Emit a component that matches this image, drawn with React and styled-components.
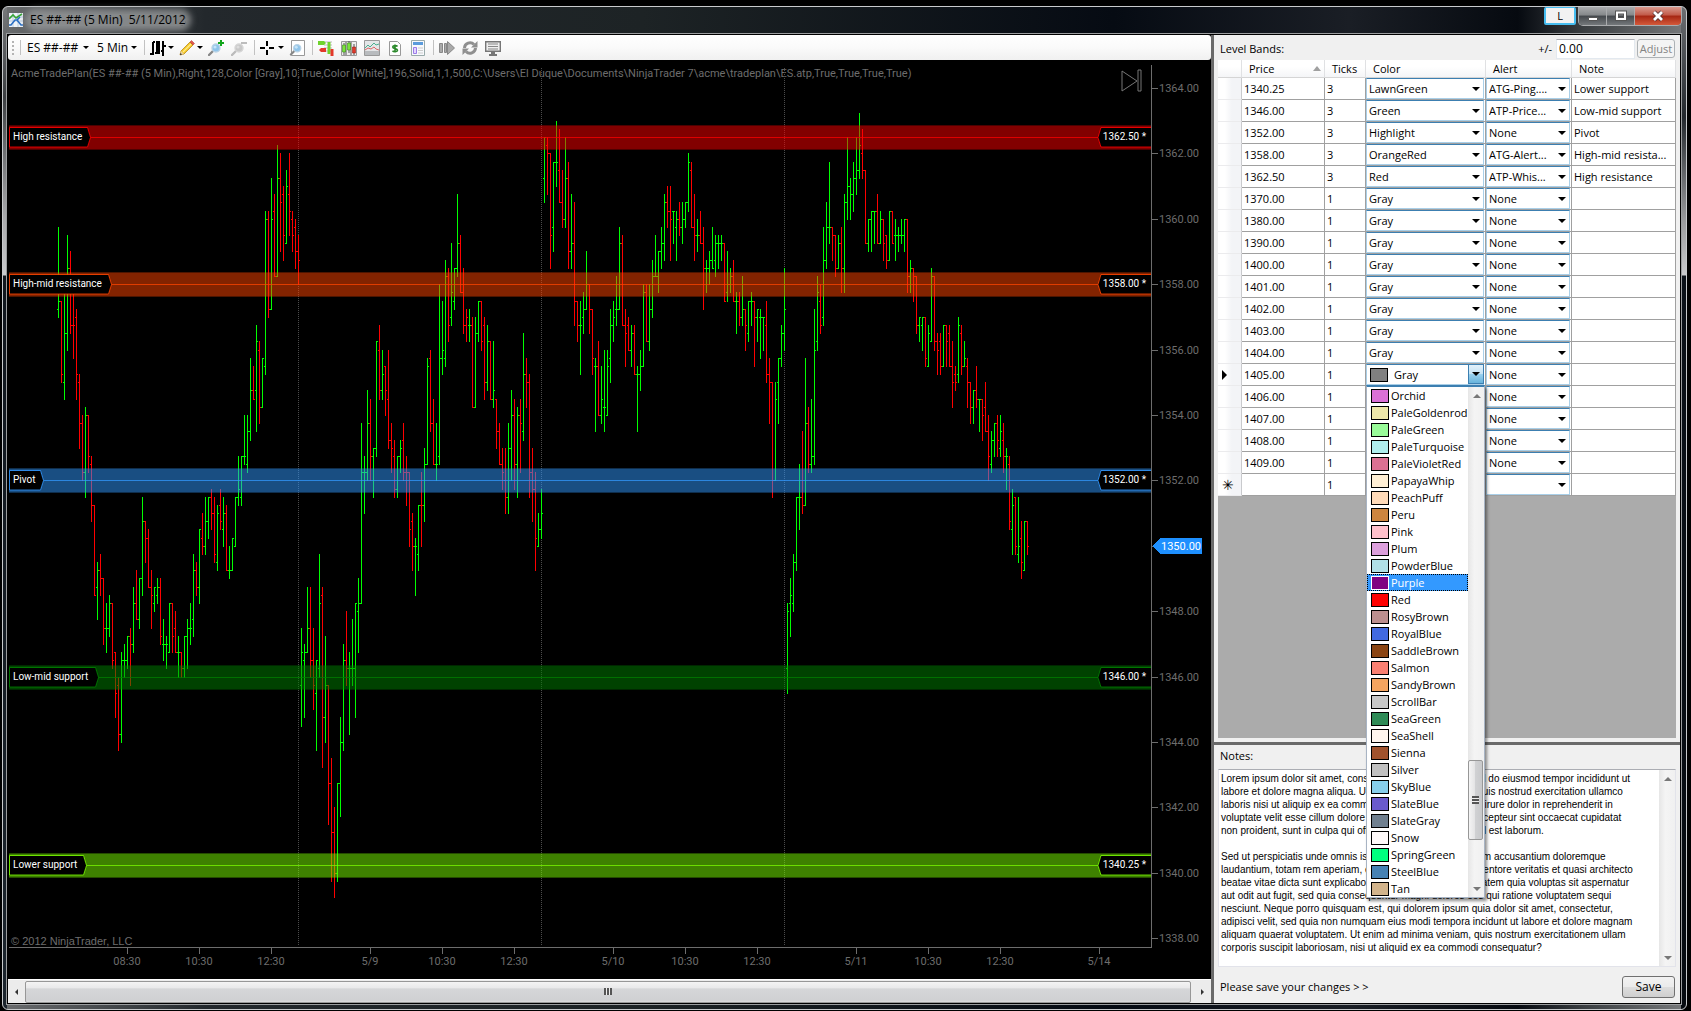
import React, { useLayoutEffect, useRef, useState } from 'react';
import styled, { createGlobalStyle, css } from 'styled-components';

const uiFont = '"Open Sans", "Noto Sans", sans-serif';

const GlobalStyle = createGlobalStyle`
  * { box-sizing: border-box; }
  html, body, #root { height: 100%; margin: 0; }
  body {
    background: #000;
    color: #000;
    font-family: ${uiFont};
    font-size: 11px;
    line-height: 16px;
    overflow: hidden;
  }
  button, input, select, textarea { font: inherit; color: inherit; margin: 0; }
`;

/* ---------- window frame ---------- */

const Screen = styled.div`
  height: 100vh;
  padding: 6px 4px 1px 2px;
`;

const Window = styled.div`
  display: flex;
  flex-direction: column;
  height: 100%;
  padding: 0 4px 4px 3px;
  border: 1px solid #c8cacc;
  border-radius: 6px;
  background:
    linear-gradient(#77797b 0, #3c3f42 90px, #a8a9ab 210px, #c9cacc 268px, #10161d 269px, #1c252d 100%) left / 4px 100% no-repeat,
    linear-gradient(#6c6f72 0, #23282d 110px, #9b9c9e 215px, #c9cacc 268px, #0b1118 269px, #060b10 100%) right / 5px 100% no-repeat,
    linear-gradient(90deg, #6a6c6e 0, #23282c 12%, #1d2325 38%, #060b13 66%, #1a1e25 80%, #060a10 90%, #3b3f42 94%, #77797b 100%);
`;

const TitleBar = styled.div`
  display: flex;
  height: 26px;
  flex: none;
`;

const TitleLabel = styled.h1`
  display: flex;
  align-items: center;
  gap: 7px;
  flex: 1;
  margin: 0;
  padding-left: 3px;
  font-size: 12px;
  font-weight: 400;
  white-space: pre;

  span {
    border-radius: 9px;
    background: rgba(150, 152, 154, 0.8);
    box-shadow: 0 0 6px 5px rgba(150, 152, 154, 0.8);
    line-height: 12px;
  }
`;

const PinButton = styled.button`
  width: 32px;
  height: 18px;
  margin-right: 2px;
  padding: 0;
  border: 2px solid #46bdf0;
  border-top-width: 1px;
  border-radius: 2px;
  background: #f2f2f2;
  line-height: 14px;
`;

const CaptionButtons = styled.div`
  display: flex;
  height: 19px;
  border: 1px solid #a9abad;
  border-top: 0;
  border-radius: 0 0 5px 5px;
  overflow: hidden;
`;

const CaptionButton = styled.button`
  display: flex;
  align-items: center;
  justify-content: center;
  width: ${(p) => (p.$close ? 46 : 28)}px;
  padding: 0;
  border: 0;
  border-right: ${(p) => (p.$close ? 0 : 1)}px solid #a9abad;
  background: ${(p) =>
    p.$close
      ? 'linear-gradient(#d8998d, #c25a48 45%, #a52612 50%, #d4593a)'
      : 'linear-gradient(#a9abad, #85888a 45%, #44484c 50%, #74787b)'};
`;

const Client = styled.div`
  display: flex;
  flex: 1;
  min-height: 0;
  border: 1px solid #9b9d9f;
  background: #f0f0f0;
  box-shadow: inset 0 0 0 1px #000;
  padding: 1px;
`;

/* ---------- chart side ---------- */

const ChartPane = styled.section`
  display: flex;
  flex-direction: column;
  flex: 1;
  min-width: 0;
  background: #000;
`;

const Toolbar = styled.div`
  display: flex;
  align-items: center;
  gap: 5px;
  height: 25px;
  flex: none;
  padding-left: 3px;
  border-radius: 3px;
  background: linear-gradient(#fff, #fafafa 50%, #f0f0f0);
  font-size: 12px;
`;

const Grip = styled.i`
  width: 4px;
  height: 15px;
  background: radial-gradient(circle, #b4b4b4 1px, transparent 1px) 0 0 / 4px 4px;
`;

const Separator = styled.i`
  width: 1px;
  height: 15px;
  background: #c2c2c2;
`;

const Caret = styled.i`
  flex: none;
  border: solid transparent;
  border-width: 3px 3px 0;
  border-top-color: #000;
`;

const ToolSelect = styled.label`
  display: flex;
  align-items: center;
  width: ${(p) => p.$width}px;
  padding: 0 2px 0 1px;

  select {
    flex: 1;
    min-width: 0;
    padding: 0;
    border: 0;
    appearance: none;
    background: none;
  }
`;

const ToolButton = styled.button`
  display: flex;
  align-items: center;
  justify-content: space-between;
  width: ${(p) => (p.$menu ? 24 : 18)}px;
  height: 18px;
  padding: 0;
  border: 0;
  background: none;
`;

const ChartArea = styled.div`
  flex: 1;
  min-height: 0;
  overflow: hidden;

  svg { display: block; }
  text { font-family: Roboto, ${uiFont}; }
`;

const HScroll = styled.div`
  display: flex;
  align-items: center;
  height: 24px;
  flex: none;
  border-top: 1px solid #fff;
  background: #ececec;
`;

const ScrollArrow = styled.button`
  display: flex;
  align-items: center;
  justify-content: center;
  width: 17px;
  height: 17px;
  flex: none;
  padding: 0;
  border: 0;
  background: none;

  &::before {
    content: '';
    border: 3px solid transparent;
    ${(p) => p.$dir === 'up' && 'border-width: 0 4px 4px; border-bottom-color: #777;'}
    ${(p) => p.$dir === 'down' && 'border-width: 4px 4px 0; border-top-color: #777;'}
    ${(p) => p.$dir === 'left' && 'border-left-width: 0; border-right-color: #333;'}
    ${(p) => p.$dir === 'right' && 'border-right-width: 0; border-left-color: #333;'}
  }
`;

const HThumb = styled.div`
  display: flex;
  align-items: center;
  justify-content: center;
  flex: 1;
  height: 22px;
  margin-right: 3px;
  border: 1px solid #979797;
  border-radius: 2px;
  background: linear-gradient(#f4f4f4, #e9e9ea 30%, #d5d6d8 34%, #d0d1d3 90%, #dcdcdc);
`;

const ThumbLines = styled.i`
  width: ${(p) => (p.$vertical ? 7 : 8)}px;
  height: ${(p) => (p.$vertical ? 8 : 7)}px;
  background: repeating-linear-gradient(${(p) => (p.$vertical ? '180deg' : '90deg')}, #555 0 2px, #eee 2px 3px);
`;

/* ---------- trade plan side ---------- */

const Sidebar = styled.aside`
  display: flex;
  flex-direction: column;
  width: 469px;
  flex: none;
  border-left: 3px solid #6a6a6a;
  background: #f0f0f0;
`;

const BandPanel = styled.section`
  display: flex;
  flex-direction: column;
  flex: 1;
  min-height: 0;
  padding: 0 4px 4px;
`;

const PanelBar = styled.div`
  display: flex;
  align-items: center;
  gap: 2px;
  height: 25px;
  flex: none;
  padding: 2px 1px 0 2px;
`;

const PanelTitle = styled.h2`
  flex: 1;
  margin: 0;
  font-size: 11px;
  font-weight: 400;
`;

const AdjustInput = styled.input`
  width: 79px;
  height: 20px;
  margin-left: 2px;
  padding: 0 2px;
  border: 1px solid #e3e9ef;
  border-top-color: #abadb3;
  background: #fff;
  font-size: 12px;
`;

const PushButton = styled.button`
  width: ${(p) => p.$width}px;
  height: ${(p) => p.$height}px;
  padding: 0;
  border: 1px solid #707070;
  border-radius: 3px;
  background: linear-gradient(#f2f2f2, #ebebeb 50%, #dddddd 51%, #cfcfcf);
  font-size: ${(p) => (p.disabled ? 11 : 12)}px;

  &:disabled {
    border-color: #adb2b5;
    background: #f4f4f4;
    color: #838383;
  }
`;

const GridArea = styled.div`
  flex: 1;
  min-height: 0;
  background: #ababab;
`;

const Grid = styled.table`
  width: 100%;
  table-layout: fixed;
  border-collapse: separate;
  border-spacing: 0;
`;

const HeadCell = styled.th`
  height: 18px;
  padding: 0 0 0 7px;
  border-right: 1px solid #e0e1e3;
  border-bottom: 1px solid #d5d5d5;
  background: linear-gradient(#fff 40%, #f4f5f7);
  font-weight: 400;
  text-align: left;

  span { display: flex; align-items: center; justify-content: space-between; padding-right: 3px; }
`;

const SortMark = styled.i`
  border: solid transparent;
  border-width: 0 4px 5px;
  border-bottom-color: #a0a0a0;
`;

const cellBox = css`
  height: 22px;
  border-bottom: 1px solid #a0a0a0;
`;

const RowHead = styled.th`
  ${cellBox}
  padding: 0 0 0 4px;
  border-right: 1px solid #c9cacd;
  border-bottom-color: #ebebed;
  background: linear-gradient(90deg, #fff 30%, #f3f4f7 60%);
  text-align: left;
  font-size: 14px;
  font-weight: 400;
  line-height: 16px;
`;

const RowMarker = styled.i`
  display: block;
  width: 0;
  border: solid transparent;
  border-width: 5px 0 5px 5px;
  border-left-color: #000;
`;

const Cell = styled.td`
  ${cellBox}
  position: relative;
  padding: 0 0 0 2px;
  border-right: 1px solid #a0a0a0;
  background: #fff;
  white-space: nowrap;
`;

const ComboCell = styled(Cell)`
  padding: 0 1px 0 0;
`;

const Combo = styled.label`
  display: flex;
  align-items: center;
  height: 21px;
  padding: 0 3px 0 2px;
  border: 1px solid #a9cfe8;
  border-top-color: #3c7fb1;

  select {
    flex: 1;
    min-width: 0;
    padding: 0;
    border: 0;
    appearance: none;
    background: none;
    overflow: hidden;
  }

  i { border-width: 4px 4px 0; }
`;

const OpenCombo = styled.button`
  display: flex;
  align-items: center;
  width: 100%;
  height: 21px;
  padding: 0 0 0 3px;
  border: 1px solid #a9cfe8;
  border-top-color: #3c7fb1;
  border-right: 0;
  background: #fff;
  text-align: left;

  b {
    display: flex;
    align-items: center;
    justify-content: center;
    width: 16px;
    align-self: stretch;
    margin-left: auto;
    border: 1px solid #3c7fb1;
    border-top: 0;
    background: linear-gradient(#e3f1fa, #c4e3f5 48%, #98d0ee 52%, #68b3db);
  }
  b i { border-width: 4px 4px 0; }
`;

const Swatch = styled.i`
  width: 18px;
  height: 14px;
  flex: none;
  margin-right: ${(p) => (p.$wide ? 6 : 2)}px;
  border: 1px solid ${(p) => (p.$active ? '#fff' : '#000')};
  background: ${(p) => p.$color};
`;

const DropList = styled.div`
  display: flex;
  position: absolute;
  top: 21px;
  left: 0;
  right: 0;
  z-index: 5;
  border: 1px solid #a8b4c4;
  border-top: 2px solid #3c7fb1;
  background: #fff;
  box-shadow: 2px 3px 3px rgba(0, 0, 0, 0.45);
`;

const Options = styled.ul`
  flex: 1;
  min-width: 0;
  margin: 0;
  padding: 0;
  list-style: none;
`;

const Option = styled.li`
  display: flex;
  align-items: center;
  height: 17px;
  padding-left: 4px;
  background: ${(p) => (p.$active ? '#3399ff' : '#fff')};
  color: ${(p) => (p.$active ? '#fff' : '#000')};
  outline: ${(p) => (p.$active ? '1px dotted #000' : 'none')};
  outline-offset: -1px;
`;

const VScroll = styled.div`
  display: flex;
  flex-direction: column;
  justify-content: space-between;
  width: 16px;
  background: linear-gradient(90deg, #e6e6e6, #f4f4f4 40%, #f0f0f0);
`;

const VThumb = styled.div`
  display: flex;
  align-items: center;
  justify-content: center;
  height: 80px;
  margin: auto 1px 40px 0;
  border: 1px solid #979797;
  border-radius: 2px;
  background: linear-gradient(90deg, #f4f4f4, #e4e4e5 45%, #d0d1d3 50%, #c8c9cb);
`;

const NotesPanel = styled.section`
  flex: none;
  padding: 3px 4px 4px;
  border-top: 3px solid #6a6a6a;
`;

const NotesLabel = styled.label`
  display: block;
  padding: 0 2px;
  height: 21px;
`;

const NotesBox = styled.div`
  display: flex;
  height: 198px;
  border: 1px solid #e2e3ea;
  border-top-color: #abadb3;
  background: #fff;

  textarea {
    flex: 1;
    min-width: 0;
    padding: 2px 0 0 2px;
    border: 0;
    outline: 0;
    resize: none;
    overflow: hidden;
    white-space: pre;
    font: 10px/13px "Liberation Sans", Arial, sans-serif;
  }
`;

const Footer = styled.div`
  display: flex;
  align-items: center;
  justify-content: space-between;
  padding: 9px 1px 1px 2px;
`;

/* ---------- data ---------- */

const levels = [
  { price: 1362.5, text: '1362.50', name: 'High resistance', color: 'red', width: 83 },
  { price: 1358, text: '1358.00', name: 'High-mid resistance', color: 'orangered', width: 104 },
  { price: 1352, text: '1352.00', name: 'Pivot', color: '#3399ff', width: 36 },
  { price: 1346, text: '1346.00', name: 'Low-mid support', color: 'green', width: 91 },
  { price: 1340.25, text: '1340.25', name: 'Lower support', color: 'lawngreen', width: 79 },
];

const rows = [
  ['1340.25', 3, 'LawnGreen', 'ATG-Ping....', 'Lower support'],
  ['1346.00', 3, 'Green', 'ATP-Price...', 'Low-mid support'],
  ['1352.00', 3, 'Highlight', 'None', 'Pivot'],
  ['1358.00', 3, 'OrangeRed', 'ATG-Alert...', 'High-mid resista...'],
  ['1362.50', 3, 'Red', 'ATP-Whis...', 'High resistance'],
  ...['1370.00', '1380.00', '1390.00', '1400.00', '1401.00', '1402.00', '1403.00', '1404.00',
    '1405.00', '1406.00', '1407.00', '1408.00', '1409.00'].map((p) => [p, 1, 'Gray', 'None', '']),
  ['', 1, '', '', ''],
];

const colorNames = [
  'Orchid', 'PaleGoldenrod', 'PaleGreen', 'PaleTurquoise', 'PaleVioletRed', 'PapayaWhip',
  'PeachPuff', 'Peru', 'Pink', 'Plum', 'PowderBlue', 'Purple', 'Red', 'RosyBrown', 'RoyalBlue',
  'SaddleBrown', 'Salmon', 'SandyBrown', 'ScrollBar', 'SeaGreen', 'SeaShell', 'Sienna', 'Silver',
  'SkyBlue', 'SlateBlue', 'SlateGray', 'Snow', 'SpringGreen', 'SteelBlue', 'Tan',
];

const notes = `Lorem ipsum dolor sit amet, consectetur adipisicing elit, sed do eiusmod tempor incididunt ut
labore et dolore magna aliqua. Ut enim ad minim veniam, quis nostrud exercitation ullamco
laboris nisi ut aliquip ex ea commodo consequat. Duis aute irure dolor in reprehenderit in
voluptate velit esse cillum dolore eu fugiat nulla pariatur. Excepteur sint occaecat cupidatat
non proident, sunt in culpa qui officia deserunt mollit anim id est laborum.

Sed ut perspiciatis unde omnis iste natus error sit voluptatem accusantium doloremque
laudantium, totam rem aperiam, eaque ipsa quae ab illo inventore veritatis et quasi architecto
beatae vitae dicta sunt explicabo. Nemo enim ipsam voluptatem quia voluptas sit aspernatur
aut odit aut fugit, sed quia consequuntur magni dolores eos qui ratione voluptatem sequi
nesciunt. Neque porro quisquam est, qui dolorem ipsum quia dolor sit amet, consectetur,
adipisci velit, sed quia non numquam eius modi tempora incidunt ut labore et dolore magnam
aliquam quaerat voluptatem. Ut enim ad minima veniam, quis nostrum exercitationem ullam
corporis suscipit laboriosam, nisi ut aliquid ex ea commodi consequatur?`;

// one bar per entry: direction, high, low, open, close, in quarter points below 1364.00
const bars = `
g 17 28 27 26,r 26 36 26 35,g 25 38 36 30,g 18 32 30 22,r 20 30 22 29,r 25 33 29 29,r 27 38 28 35,
r 35 44 36 41,r 40 48 41 47,g 39 50 47 40,r 40 47 40 45,r 45 53 46 51,r 51 62 51 62,g 58 65 61 59,
r 57 62 59 60,r 60 68 60 66,g 63 69 66 66,g 62 67 66 63,r 63 71 63 70,r 69 77 69 74,r 72 81 73 79,
g 69 80 79 70,g 68 72 70 70,g 67 71 70 67,r 66 73 67 68,g 61 69 68 63,r 59 65 63 65,g 60 66 65 60,
g 50 62 60 53,r 53 58 53 55,r 54 61 55 61,r 59 66 61 62,g 61 64 63 61,g 60 63 62 61,r 60 68 61 67,
g 65 70 68 68,g 67 71 68 68,g 63 69 69 63,r 63 69 63 67,r 64 69 66 69,g 67 72 69 69,r 69 72 69 71,
g 67 72 71 67,g 65 71 67 66,g 63 68 66 66,g 57 67 65 59,r 58 62 59 61,g 54 63 61 54,r 52 57 55 56,
g 50 57 56 53,g 50 55 53 50,r 49 54 50 52,r 50 58 52 57,g 51 59 58 52,r 49 54 51 53,g 50 56 54 52,
r 51 59 52 59,g 56 60 59 59,g 55 59 59 55,g 50 56 56 50,g 45 51 50 49,g 45 51 50 45,g 40 46 45 45,
g 40 47 46 42,g 33 43 42 37,r 34 38 37 38,g 29 42 37 31,r 31 41 32 39,g 33 39 39 33,g 15 35 34 16,
r 15 28 16 27,g 11 27 27 16,r 13 23 15 23,g 7 23 23 11,r 8 20 11 14,r 12 21 13 18,g 10 19 19 12,
r 8 18 13 15,r 15 20 16 18,r 16 22 17 20,r 18 24 20 21,
g 66 78 73 69,g 68 77 70 69,g 61 69 69 66,r 61 72 66 70,r 66 76 70 73,g 70 81 74 70,g 57 72 71 63,
r 61 83 62 77,g 67 80 77 73,r 73 90 73 85,r 82 97 85 91,r 88 99 91 96,g 85 97 96 85,g 77 89 85 80,
g 68 81 80 70,r 64 73 70 71,g 69 79 71 71,g 65 73 71 71,g 63 77 71 63,g 60 69 64 63,g 41 63 63 47,
g 45 52 47 47,g 37 48 47 41,r 38 48 41 45,g 44 50 45 44,g 31 45 44 31,r 29 38 32 37,g 32 38 37 35,
r 34 40 34 37,r 32 44 38 43,r 41 47 43 44,r 43 50 45 49,g 45 50 49 45,g 43 47 45 44,r 41 48 43 47,
r 45 51 47 47,r 47 56 47 54,r 52 59 53 56,g 55 62 56 56,g 51 59 57 51,r 47 56 51 51,g 44 53 51 46,
g 33 46 46 34,r 32 42 33 41,r 38 46 41 46,g 41 48 46 46,g 24 46 45 33,g 26 35 33 32,g 21 34 33 23,
r 22 31 23 29,g 19 29 28 25,g 22 27 26 22,g 13 23 22 19,r 18 25 19 25,r 22 30 25 29,r 27 31 29 28,
g 27 31 29 29,r 28 39 29 39,g 28 39 39 30,g 26 31 30 26,r 26 32 26 31,r 28 38 29 36,g 29 37 36 31,
r 31 38 31 38,g 31 39 38 37,r 38 44 38 42,r 41 46 42 46,r 44 49 46 47,r 44 52 48 50,g 41 52 50 44,
g 37 48 44 40,r 38 49 40 46,g 39 50 46 40,r 38 47 40 41,g 30 43 42 35,r 33 39 35 36,r 35 50 36 47,
r 44 53 47 49,r 47 59 49 55,g 52 56 56 54,g 49 55 54 52,
g 6 14 11 6,r 6 13 7 8,r 8 22 8 18,g 9 20 17 9,g 4 12 9 9,r 5 14 10 14,r 10 17 14 16,g 6 17 16 11,
r 9 22 11 20,g 13 22 20 19,r 14 29 19 26,r 26 31 26 29,g 26 35 29 29,g 25 30 28 27,g 20 27 27 24,
r 24 30 24 27,r 27 35 27 33,g 33 42 34 34,r 31 40 34 40,g 34 41 40 38,g 32 42 39 39,g 32 40 40 34,
g 27 36 33 29,g 26 31 29 28,g 23 29 27 27,g 17 27 27 19,r 18 29 19 29,r 27 34 29 30,r 28 32 29 32,
g 29 34 32 30,r 29 35 30 35,g 34 42 35 35,g 32 37 35 34,g 24 34 34 25,r 24 31 25 31,g 24 32 31 27,
g 21 28 27 23,g 18 23 23 23,g 20 25 23 20,g 17 22 20 19,g 13 21 19 14,r 12 17 14 15,r 12 21 15 16,
g 15 19 15 15,g 15 21 17 16,r 14 18 16 17,g 14 19 17 16,g 14 17 16 14,g 8 15 14 9,r 9 17 10 17,
r 13 21 17 18,g 16 20 18 18,r 15 19 18 19,r 17 27 19 22,g 21 25 22 22,g 20 24 22 21,g 17 22 21 22,
g 18 23 21 19,g 18 22 19 19,g 18 21 19 19,r 19 26 19 26,g 20 26 25 24,g 22 25 24 23,r 21 26 23 26,
g 25 30 26 26,r 25 29 26 28,g 23 29 28 27,r 27 32 27 29,g 26 31 30 26,g 25 29 26 26,r 26 34 26 28,
g 27 31 28 27,g 27 33 28 28,g 28 32 28 28,r 26 36 29 35,r 33 41 35 36,r 36 50 36 48,g 36 48 48 38,
g 33 41 36 33,g 29 34 33 30,g 22 32 30 27,
g 63 74 71 64,g 60 67 63 62,g 57 64 63 58,g 50 59 58 50,g 46 54 50 50,r 42 52 50 51,g 33 51 51 41,
r 39 47 41 46,g 38 47 46 45,g 27 46 45 32,g 23 32 31 25,r 24 30 26 29,g 17 29 28 21,g 14 22 21 17,
g 9 19 17 17,r 17 21 17 18,r 18 23 18 22,g 18 22 22 19,r 17 25 19 22,g 13 25 22 14,g 6 16 14 12,
g 11 16 12 13,g 9 15 13 11,g 6 13 11 10,g 3 11 10 7,r 5 11 8 10,r 10 19 10 19,g 16 20 19 16,
g 15 20 16 15,g 15 19 15 15,r 13 19 15 19,g 15 19 19 16,r 16 21 16 19,r 18 22 18 21,g 15 21 21 15,
r 15 19 15 19,g 16 21 18 18,g 17 20 18 18,g 16 19 18 18,g 16 20 18 16,r 16 25 16 23,g 21 25 23 22,
r 22 26 22 23,r 23 30 23 29,g 28 31 29 28,g 28 32 29 28,r 28 34 28 33,g 29 34 34 30,g 22 31 31 23,
r 23 32 23 31,r 30 35 31 32,r 30 35 31 34,g 29 34 34 29,r 29 34 29 31,r 29 34 30 34,r 31 39 34 36,
r 34 37 35 36,g 28 36 35 29,r 29 35 30 34,g 31 34 34 33,r 33 39 34 36,r 36 41 36 39,g 37 41 39 37,
r 34 39 37 38,g 38 42 38 38,r 38 43 38 40,r 36 42 39 42,r 40 48 42 45,g 42 47 46 43,g 41 45 43 41,
r 40 45 41 43,g 40 45 44 42,r 41 47 43 45,g 44 49 45 45,r 45 54 46 53,g 49 57 54 51,r 50 57 50 56,
g 50 58 57 56,r 53 60 55 58,g 53 59 59 53,r 53 57 53 56`
  .split(',')
  .map((s) => s.trim().split(' '))
  .map(([dir, ...v]) => [dir, ...v.map(Number)]);

const timeTicks = [
  [119, '08:30'], [191, '10:30'], [263, '12:30'], [362, '5/9'], [434, '10:30'], [506, '12:30'],
  [605, '5/10'], [677, '10:30'], [749, '12:30'], [848, '5/11'], [920, '10:30'], [992, '12:30'], [1091, '5/14'],
];

/* ---------- icons ---------- */

const Icon = ({ children }) => (
  <svg width="16" height="16" viewBox="0 0 16 16" fill="none" aria-hidden="true">{children}</svg>
);

const Lens = ({ gray }) => (
  <>
    <path d="M1 15l5-5" stroke={gray ? '#bbb' : '#888'} strokeWidth="2.4" strokeLinecap="round" />
    <circle cx="8" cy="8" r="4" fill={gray ? '#c8c8c8' : '#8fc4ea'} stroke={gray ? '#d6d6d6' : '#b9d3e6'} strokeWidth="1.4" />
    <circle cx="7" cy="7" r="1.6" fill={gray ? '#ddd' : '#c5e4f8'} />
  </>
);

const BarsIcon = () => (
  <Icon>
    <path d="M0 14h3M3 2v13M3 2h2M7 1v13M5 13h2M9 1v13M7 2h2M13 1v15M11 11h2M13 6h3" stroke="#000" strokeWidth="2" shapeRendering="crispEdges" />
  </Icon>
);

const PencilIcon = () => (
  <Icon>
    <path d="M1 15l1-4L11 2l3 3-9 9z" fill="#f5c928" stroke="#b98a1c" strokeWidth=".8" />
    <path d="M4 12l8-8" stroke="#ffeb8a" strokeWidth="1.2" />
    <path d="M11 2l1.500-1.500 3 3L14 5z" fill="#e2574c" stroke="#a33" strokeWidth=".5" />
    <path d="M1 15l1-4 3 3z" fill="#e9d3a8" />
    <path d="M1 15l.5-2 1.500 1.500z" fill="#222" />
  </Icon>
);

const ZoomInIcon = () => (
  <Icon><Lens /><path d="M13 0v6M10 3h6" stroke="#12a51c" strokeWidth="2" /></Icon>
);

const ZoomOutIcon = () => (
  <Icon><Lens gray /><path d="M10 3h6" stroke="#bdbdbd" strokeWidth="2" /></Icon>
);

const CrossIcon = () => (
  <Icon><path d="M7 1v5M7 10v5M0 8h5M9 8h5" stroke="#000" strokeWidth="2" /></Icon>
);

const ZoomPageIcon = () => (
  <Icon><path d="M2.500 .5h13v15h-13z" fill="#fff" stroke="#999" /><g transform="translate(1 1) scale(.9)"><Lens /></g></Icon>
);

const DomIcon = () => (
  <Icon>
    <path d="M6 2h8M6 5h8M6 8h8M6 11h8" stroke="#bbb" />
    <path d="M0 1h6l2 2-2 2H0z" fill="#6fd32c" /><path d="M8 8H3L1 10l2 2h5z" fill="#e2382a" />
    <path d="M11 2v12" stroke="#6fd32c" strokeWidth="3" /><path d="M14 9v7" stroke="#e2382a" strokeWidth="3" />
  </Icon>
);

const CandleIcon = () => (
  <Icon>
    <path d="M.5 1.500h15v14H.5z" fill="#eee" stroke="#999" />
    <path d="M3 3v12M8 1v12M13 4v11M5 2v13M10 2v13" stroke="#555" />
    <path d="M1.500 5h3v7h-3zM6.500 3h3v7h-3z" fill="#7be33c" stroke="#3a8a1b" strokeWidth=".6" />
    <path d="M11.500 7h3v6h-3z" fill="#e2382a" stroke="#951e14" strokeWidth=".6" />
  </Icon>
);

const LinesIcon = () => (
  <Icon>
    <path d="M.5.5h15v15H.5z" fill="#e4e6e8" stroke="#999" /><path d="M1 11h14v4H1z" fill="#b8bbbe" />
    <path d="M1 8l3-3 2 2 4-4 2 2 3-1" stroke="#4bb08f" /><path d="M1 10l3-2 3 1 3-2 2 2 3 1" stroke="#d66" />
  </Icon>
);

const AccountIcon = () => (
  <Icon>
    <path d="M2.500 1.500h8l3 3v11h-11z" fill="#fff" stroke="#999" />
    <path d="M10.500 6.500c-1-1.300-4.800-1.200-4.800.6 0 2 4.800 1 4.800 3.100 0 1.800-3.800 2-5 .5M8 4.500v8" stroke="#2c8a2c" strokeWidth="1.600" />
  </Icon>
);

const PropsIcon = () => (
  <Icon>
    <path d="M1.500.5h13v15h-13z" fill="#f7f9fc" stroke="#9aa" />
    <path d="M3 2h10v3H3z" fill="#5a9bdc" /><path d="M3.500 7.500h3v6h-3z" fill="#e3d6ff" stroke="#9b7be8" />
    <path d="M8 8h5M8 10.500h5M8 13h5" stroke="#ccc" />
  </Icon>
);

const PlayIcon = () => (
  <Icon><path d="M.5 3.500h3v9h-3zM5.500 3.500h2v9h-2zM8.500 1.500L15.500 8l-7 6.500z" fill="#aaa" stroke="#888" /></Icon>
);

const RefreshIcon = () => (
  <Icon>
    <path d="M2.500 8A5.500 5.500 0 0 1 12 4.500M13.500 8A5.500 5.500 0 0 1 4 11.500" stroke="#8f8f8f" strokeWidth="3" />
    <path d="M15.500 1v6.500H9zM.5 15V8.500H7z" fill="#8f8f8f" />
  </Icon>
);

const MonitorIcon = () => (
  <Icon>
    <path d="M.7 1.700h14.600v9.600H.7z" fill="#eee" stroke="#777" strokeWidth="1.400" />
    <path d="M3 4h10M3 6.500h10M3 9h10" stroke="#888" /><path d="M6 12h4v2h2v2H4v-2h2z" fill="#777" />
  </Icon>
);

const AppIcon = () => (
  <svg width="14" height="14" viewBox="0 0 14 14" fill="none" aria-hidden="true">
    <path d="M0 0h14v14H0z" fill="#eef3f8" />
    <path d="M0 4h14M0 8h14M4 0v14M9 0v14" stroke="#b9cbe0" />
    <path d="M0 6l4-4 3 3 6-4" stroke="#35a535" strokeWidth="1.600" />
    <path d="M0 12h2l4-5h2l3-3M8 7l4 5h2" stroke="#2a6fc4" strokeWidth="1.600" />
  </svg>
);

/* ---------- chart ---------- */

const AXIS_RIGHT = 60;
const AXIS_BOTTOM = 32;
const TOP = 28;
const TICKS_SHOWN = 105.08;

const Chart = () => {
  const ref = useRef(null);
  const [size, setSize] = useState({ w: 1203, h: 919 });

  useLayoutEffect(() => {
    const measure = () => {
      const { clientWidth, clientHeight } = ref.current;
      setSize({ w: clientWidth, h: clientHeight });
    };
    measure();
    const observer = new ResizeObserver(measure);
    observer.observe(ref.current);
    return () => observer.disconnect();
  }, []);

  const { w, h } = size;
  const right = w - AXIS_RIGHT;
  const bottom = h - AXIS_BOTTOM;
  const yTick = (n) => Math.round(TOP + (n * (bottom - TOP)) / TICKS_SHOWN);
  const yPrice = (p) => yTick((1364 - p) * 4);
  const barX = (i) => 50 + i * 3;
  const gray = '#6d6d6d';

  return (
    <ChartArea ref={ref}>
      <svg width={w} height={h} shapeRendering="crispEdges" fontSize="11">
        <text x="3" y="17" fill={gray}>
          {'AcmeTradePlan(ES ##-## (5 Min),Right,128,Color [Gray],10,True,Color [White],196,Solid,1,1,500,C:\\Users\\El Duque\\Documents\\NinjaTrader 7\\acme\\tradeplan\\ES.atp,True,True,True,True)'}
        </text>
        <text x="3" y={bottom - 2} fill={gray} style={{ fontFamily: '"Liberation Sans", Arial, sans-serif' }}>
          © 2012 NinjaTrader, LLC
        </text>
        <path d={`M${right - 29} 11l15 10l-15 10zM${right - 13} 10h3v21h-3z`} fill="none" stroke="#777" shapeRendering="auto" />

        {[80, 161, 242].map((i) => (
          <path key={i} d={`M${barX(i) + 0.5} 8V${bottom - 2}`} stroke="#4c4c4c" strokeDasharray="1 1" />
        ))}

        {bars.map(([dir, high, low, open, close], i) => (
          <path
            key={i}
            d={`M${barX(i) + 0.5} ${yTick(high)}V${yTick(low) + 1}M${barX(i) - 1} ${yTick(open) + 0.5}h1M${barX(i) + 1} ${yTick(close) + 0.5}h1`}
            stroke={dir === 'g' ? '#00ff00' : '#ff0000'}
          />
        ))}

        {levels.map((l) => {
          const y = yPrice(l.price);
          return (
            <g key={l.name}>
              <rect x="1" y={y - 12} width={right - 1} height="25" fill={l.color} opacity=".3" />
              <rect x="1" y={y - 11} width={right - 1} height="23" fill={l.color} opacity=".3" />
              <path d={`M${l.width} ${y + 0.5}H${right - 53}`} stroke={l.color} opacity=".75" />
              <path d={`M1.5 ${y - 9.5}h${l.width - 5}l3 10l-3 9.500H1.500z`} fill="#000" />
              <path d={`M1.5 ${y - 9.5}h${l.width - 5}l3 10l-3 9.500H1.500z`} fill="none" stroke={l.color} opacity=".8" shapeRendering="auto" />
              <path d={`M${right} ${y - 9.5}h-50l-3 10l3 9.500h50`} fill="#000" />
              <path d={`M${right} ${y - 9.5}h-50l-3 10l3 9.500h50`} fill="none" stroke={l.color} opacity=".8" shapeRendering="auto" />
              <text x="5" y={y + 3} fontSize="10" fill="#fff">{l.name}</text>
              <text x={right - 5} y={y + 3} fontSize="10" fill="#fff" textAnchor="end">{l.text} *</text>
            </g>
          );
        })}

        <path d={`M${right + 0.5} 5V${bottom + 0.5}H1`} fill="none" stroke={gray} />
        {Array.from({ length: 14 }, (_, i) => 1364 - i * 2).map((p) => (
          <g key={p}>
            <path d={`M${right} ${yPrice(p) + 0.5}h7`} stroke={gray} />
            {p !== 1350 && <text x={right + 8} y={yPrice(p) + 4} fill={gray}>{p.toFixed(2)}</text>}
          </g>
        ))}
        <path d={`M${right + 1} ${yPrice(1350)}l8-8h42v16h-42z`} fill="#1e90ff" />
        <text x={right + 10} y={yPrice(1350) + 4} fill="#fff">1350.00</text>

        {timeTicks.map(([x, label]) => (
          <g key={x}>
            <path d={`M${x + 0.5} ${bottom + 1}v6`} stroke={gray} />
            <text x={x} y={bottom + 18} fill={gray} textAnchor="middle">{label}</text>
          </g>
        ))}
      </svg>
    </ChartArea>
  );
};

/* ---------- grid ---------- */

const ComboSelect = ({ value, label }) => (
  <Combo>
    <select aria-label={label} defaultValue={value}>
      <option value={value}>{value}</option>
    </select>
    <Caret />
  </Combo>
);

const ColorPicker = () => (
  <>
    <OpenCombo aria-haspopup="listbox" aria-expanded="true">
      <Swatch $color="gray" $wide />
      Gray
      <b><Caret /></b>
    </OpenCombo>
    <DropList>
      <Options role="listbox" aria-label="Color">
        {colorNames.map((name) => (
          <Option key={name} role="option" aria-selected={name === 'Purple'} $active={name === 'Purple'}>
            <Swatch $color={name === 'ScrollBar' ? '#c8c8c8' : name} $active={name === 'Purple'} />
            {name}
          </Option>
        ))}
      </Options>
      <VScroll>
        <ScrollArrow $dir="up" aria-label="Scroll up" />
        <VThumb><ThumbLines $vertical /></VThumb>
        <ScrollArrow $dir="down" aria-label="Scroll down" />
      </VScroll>
    </DropList>
  </>
);

const BandGrid = () => (
  <Grid>
    <colgroup>
      <col style={{ width: 24 }} />
      <col style={{ width: 83 }} />
      <col style={{ width: 41 }} />
      <col style={{ width: 120 }} />
      <col style={{ width: 86 }} />
      <col />
    </colgroup>
    <thead>
      <tr>
        <HeadCell aria-label="Row" />
        <HeadCell><span>Price<SortMark /></span></HeadCell>
        <HeadCell>Ticks</HeadCell>
        <HeadCell>Color</HeadCell>
        <HeadCell>Alert</HeadCell>
        <HeadCell>Note</HeadCell>
      </tr>
    </thead>
    <tbody>
      {rows.map(([price, ticks, color, alert, note]) => (
        <tr key={price}>
          <RowHead>
            {price === '1405.00' && <RowMarker />}
            {price === '' && '✳'}
          </RowHead>
          <Cell>{price}</Cell>
          <Cell>{ticks}</Cell>
          <ComboCell>
            {price === '1405.00' ? <ColorPicker /> : <ComboSelect value={color} label="Color" />}
          </ComboCell>
          <ComboCell><ComboSelect value={alert} label="Alert" /></ComboCell>
          <Cell>{note}</Cell>
        </tr>
      ))}
    </tbody>
  </Grid>
);

const ChartToolbar = () => (
  <Toolbar role="toolbar">
    <Grip />
    <Separator />
    <ToolSelect $width={65}>
      <select aria-label="Instrument"><option>ES ##-##</option></select>
      <Caret />
    </ToolSelect>
    <ToolSelect $width={43}>
      <select aria-label="Interval"><option>5 Min</option></select>
      <Caret />
    </ToolSelect>
    <Separator />
    <ToolButton $menu aria-label="Chart style"><BarsIcon /><Caret /></ToolButton>
    <ToolButton $menu aria-label="Draw"><PencilIcon /><Caret /></ToolButton>
    <ToolButton aria-label="Zoom in"><ZoomInIcon /></ToolButton>
    <ToolButton aria-label="Zoom out"><ZoomOutIcon /></ToolButton>
    <Separator />
    <ToolButton $menu aria-label="Cursor"><CrossIcon /><Caret /></ToolButton>
    <ToolButton aria-label="Data box"><ZoomPageIcon /></ToolButton>
    <Separator />
    <ToolButton aria-label="Chart trader"><DomIcon /></ToolButton>
    <ToolButton aria-label="Data series"><CandleIcon /></ToolButton>
    <ToolButton aria-label="Indicators"><LinesIcon /></ToolButton>
    <ToolButton aria-label="Strategies"><AccountIcon /></ToolButton>
    <ToolButton aria-label="Properties"><PropsIcon /></ToolButton>
    <Separator />
    <ToolButton aria-label="Forward"><PlayIcon /></ToolButton>
    <ToolButton aria-label="Reload"><RefreshIcon /></ToolButton>
    <ToolButton aria-label="Display"><MonitorIcon /></ToolButton>
  </Toolbar>
);

const App = () => (
  <Screen>
    <GlobalStyle />
    <Window>
      <TitleBar>
        <TitleLabel>
          <AppIcon />
          <span>{'ES ##-## (5 Min)  5/11/2012'}</span>
        </TitleLabel>
        <PinButton>L</PinButton>
        <CaptionButtons>
          <CaptionButton aria-label="Minimize">
            <svg width="12" height="12"><path d="M1.500 7.500h9v3h-9z" fill="#fff" stroke="#555" /></svg>
          </CaptionButton>
          <CaptionButton aria-label="Maximize">
            <svg width="12" height="12" fill="none"><path d="M2 2.500h8v6.500H2z" stroke="#555" strokeWidth="4" /><path d="M2 2.500h8v6.500H2z" stroke="#fff" strokeWidth="2" /></svg>
          </CaptionButton>
          <CaptionButton $close aria-label="Close">
            <svg width="14" height="12" fill="none"><path d="M3 2l8 8M11 2l-8 8" stroke="#533" strokeWidth="4.500" /><path d="M3 2l8 8M11 2l-8 8" stroke="#fff" strokeWidth="2.800" /></svg>
          </CaptionButton>
        </CaptionButtons>
      </TitleBar>
      <Client>
        <ChartPane>
          <ChartToolbar />
          <Chart />
          <HScroll>
            <ScrollArrow $dir="left" aria-label="Scroll left" />
            <HThumb><ThumbLines /></HThumb>
            <ScrollArrow $dir="right" aria-label="Scroll right" />
          </HScroll>
        </ChartPane>
        <Sidebar>
          <BandPanel>
            <PanelBar>
              <PanelTitle>Level Bands:</PanelTitle>
              <label htmlFor="adjust">+/-</label>
              <AdjustInput id="adjust" defaultValue="0.00" />
              <PushButton $width={38} $height={19} disabled>Adjust</PushButton>
            </PanelBar>
            <GridArea><BandGrid /></GridArea>
          </BandPanel>
          <NotesPanel>
            <NotesLabel htmlFor="notes">Notes:</NotesLabel>
            <NotesBox>
              <textarea id="notes" defaultValue={notes} />
              <VScroll>
                <ScrollArrow $dir="up" aria-label="Scroll up" />
                <ScrollArrow $dir="down" aria-label="Scroll down" />
              </VScroll>
            </NotesBox>
            <Footer>
              <span>Please save your changes &gt; &gt;</span>
              <PushButton $width={53} $height={22}>Save</PushButton>
            </Footer>
          </NotesPanel>
        </Sidebar>
      </Client>
    </Window>
  </Screen>
);

export default App;
